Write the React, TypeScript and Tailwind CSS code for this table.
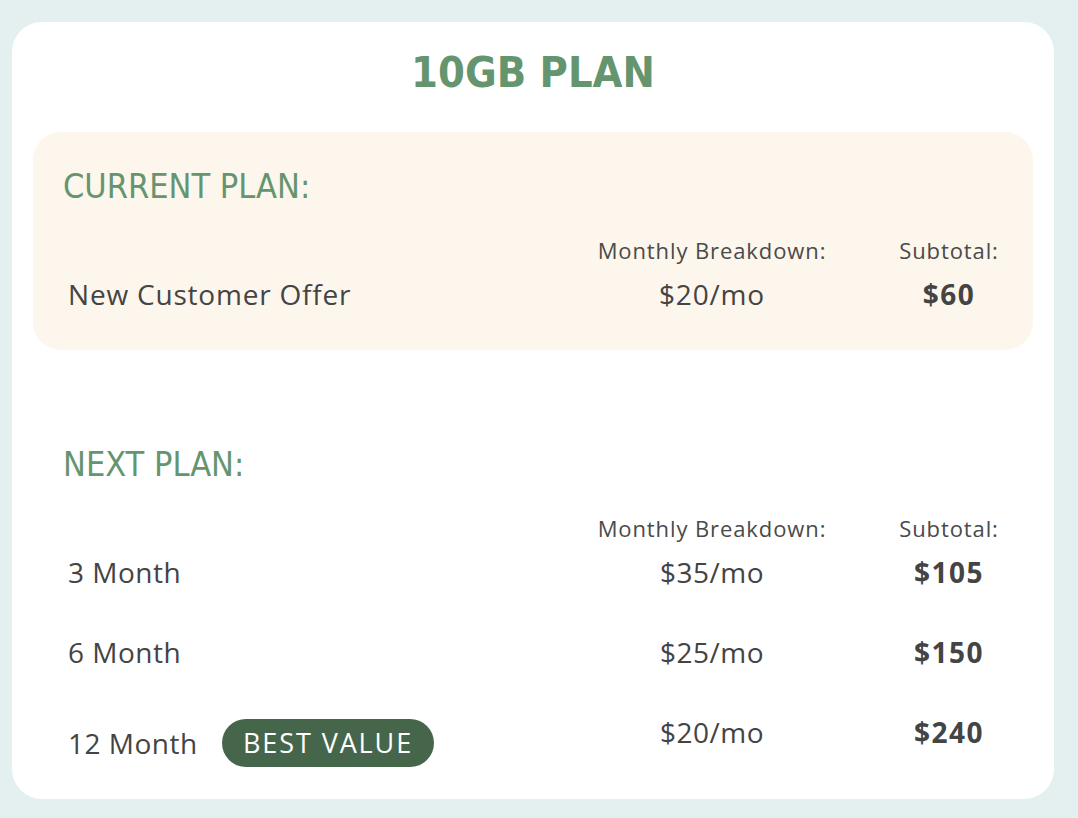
import React from "react";

type Row = {
  label: string;
  monthly: string;
  subtotal: string;
  badge?: string;
};

const nextPlans: Row[] = [
  { label: "3 Month", monthly: "$35/mo", subtotal: "$105" },
  { label: "6 Month", monthly: "$25/mo", subtotal: "$150" },
  { label: "12 Month", monthly: "$20/mo", subtotal: "$240", badge: "BEST VALUE" },
];

const body = "font-['Open_Sans','Lato','Liberation_Sans',sans-serif]";
const condensed =
  "font-['DejaVu_Sans_Condensed','Liberation_Sans_Narrow','Roboto',sans-serif] [font-stretch:condensed]";
const cols = "grid grid-cols-[1fr_240px_140px] gap-x-[47px] pr-[14px]";

const ColumnHeads = ({ className }: { className?: string }) => (
  <div className={`${cols} h-[24px] items-center text-[22px] tracking-[0.9px] text-[#4a4a4a] ${className ?? ""}`}>
    <div />
    <div className="text-center">Monthly Breakdown:</div>
    <div className="text-center">Subtotal:</div>
  </div>
);

const App: React.FC = () => {
  return (
    <div className={`min-h-[818px] bg-[#e4eff0] pt-[22px] pl-[12px] ${body}`}>
      <div className="w-[1042px] bg-white rounded-[30px] pt-[25px] pb-[32px] px-[21px]">
        <h1 className={`h-[50px] flex items-center justify-center text-[43px] font-bold text-[#64956f] ${condensed}`}>
          10GB PLAN
        </h1>

        <div className="mt-[35px] bg-[#fdf6ec] rounded-[28px] pt-[34px] pb-[38px]">
          <h2 className={`pl-[30px] h-[40px] flex items-center text-[34px] text-[#64956f] ${condensed}`}>
            CURRENT PLAN:
          </h2>
          <ColumnHeads className="mt-[28px]" />
          <div className={`${cols} mt-[15px] mb-[5px] h-[34px] items-center text-[28px] tracking-[0.8px] text-[#444]`}>
            <div className="pl-[35px]">New Customer Offer</div>
            <div className="text-center">$20/mo</div>
            <div className="text-center font-bold tracking-[1.5px]">$60</div>
          </div>
        </div>

        <div className="mt-[94px]">
          <h2 className={`pl-[30px] h-[40px] flex items-center text-[34px] text-[#64956f] ${condensed}`}>
            NEXT PLAN:
          </h2>
          <ColumnHeads className="mt-[28px]" />
          <div className="mt-[19px] flex flex-col gap-[46px]">
            {nextPlans.map((p) => (
              <div
                key={p.label}
                className={`${cols} items-start text-[28px] tracking-[0.5px] text-[#444]`}
              >
                {p.badge ? (
                  <div className="pl-[35px] mt-[4px] h-[48px] flex items-center">
                    <span className="w-[154px] shrink-0">{p.label}</span>
                    <span className="h-[48px] px-[21px] rounded-full bg-[#46664c] text-white text-[27px] tracking-[1.9px] flex items-center">
                      {p.badge}
                    </span>
                  </div>
                ) : (
                  <div className="pl-[35px] h-[34px] flex items-center">{p.label}</div>
                )}
                <div className="h-[34px] flex items-center justify-center">{p.monthly}</div>
                <div className="h-[34px] flex items-center justify-center font-bold tracking-[1.5px]">{p.subtotal}</div>
              </div>
            ))}
          </div>
        </div>
      </div>
    </div>
  );
};

export default App;
